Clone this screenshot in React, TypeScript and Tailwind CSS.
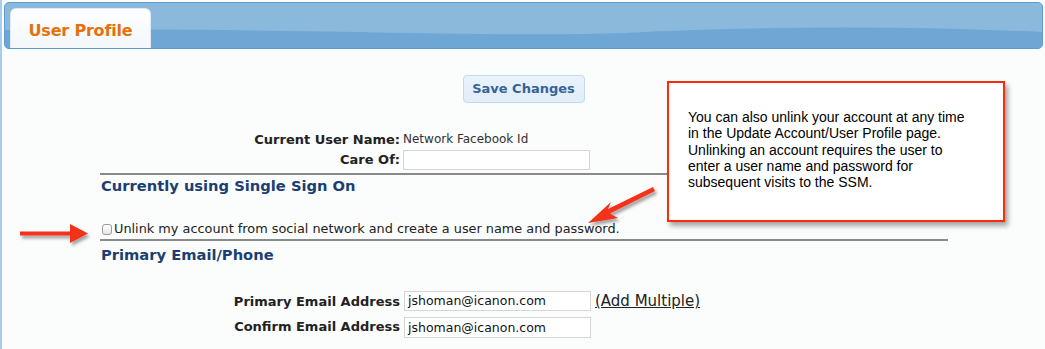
import React from "react";

const label = "font-bold text-[#222] text-right";

export default function App() {
  return (
    <div
      className="relative w-[1045px] h-[349px] overflow-hidden bg-[#fbfcfc] border-l-2 border-[#a9cdea]"
      style={{ fontFamily: '"DejaVu Sans", Verdana, sans-serif' }}
    >
      {/* header bar */}
      <div className="relative mt-[2px] ml-[2px] w-[1039px] h-[47px] rounded-[5px] border border-[#5e9bd0] overflow-hidden bg-[#6ea7d3]">
        <svg className="absolute inset-0" width="1039" height="47" viewBox="0 0 1039 47" preserveAspectRatio="none">
          <path d="M0 0 H1039 V29 C900 23 760 23 620 30 C480 35 300 24 0 27 Z" fill="#8bb9dc" />
        </svg>
        <div className="absolute left-[5px] top-[5px] w-[141px] h-[42px] rounded-t-[6px] bg-gradient-to-b from-[#fdfeff] to-[#f3f7fa] border-t border-x border-[#dfe9f2] flex items-center justify-center">
          <span className="text-[#e4700e] font-bold text-[16px] tracking-[-0.2px] mt-[2px]">User Profile</span>
        </div>
      </div>

      {/* save button */}
      <div className="flex justify-center mt-[26px]">
        <button className="w-[122px] h-[28px] rounded-[4px] border border-[#c2d9ef] bg-gradient-to-b from-[#eaf3fc] to-[#e1edf9] text-[#376496] font-bold text-[13px]">
          Save Changes
        </button>
      </div>

      {/* form */}
      <div className="pl-[98px] w-[946px] mt-[28px] text-[12px]">
        <div className="grid grid-cols-[300px_1fr] gap-x-[3px] gap-y-[2px] items-center">
          <div className={label + " text-[13px] h-[17px] leading-[17px]"}>Current User Name:</div>
          <div className="text-[#333] text-[12px] h-[17px] leading-[17px]">Network Facebook Id</div>
          <div className={label + " text-[13px]"}>Care Of:</div>
          <div className="w-[187px] h-[20px] border border-[#d5d5d5] bg-white" />
        </div>
        <div className="mt-[3px] border-t-2 border-[#8a8a8a]" />
        <div className="pl-[1px] text-[14.7px] font-bold text-[#1b3f72] leading-[22px]">Currently using Single Sign On</div>
        <div className="mt-[22px] flex items-center pl-[2px] h-[20px]">
          <span className="w-[10px] h-[11px] rounded-[3px] border border-[#9a9a9a] bg-gradient-to-b from-white to-[#e6e6e6] mr-[2px]" />
          <span className="text-[#222] text-[12.85px]">Unlink my account from social network and create a user name and password.</span>
        </div>
        <div className="border-t-2 border-[#8a8a8a]" />
        <div className="pl-[1px] mt-[3px] text-[14.7px] font-bold text-[#1b3f72] leading-[22px]">Primary Email/Phone</div>
        <div className="mt-[24px] grid grid-cols-[300px_1fr] gap-x-[4px] gap-y-[4px] items-center">
          <div className={label + " text-[13px]"}>Primary Email Address</div>
          <div className="flex items-center gap-[4px]">
            <div className="w-[187px] h-[20px] border border-[#d5d5d5] bg-white px-[3px] text-[12.5px] text-[#111] leading-[18px]">jshoman@icanon.com</div>
            <span className="underline text-[#222] text-[15px]">(Add Multiple)</span>
          </div>
          <div className={label + " text-[13px]"}>Confirm Email Address</div>
          <div className="w-[187px] h-[21px] border border-[#d5d5d5] bg-white px-[3px] text-[12.5px] text-[#111] leading-[19px]">jshoman@icanon.com</div>
        </div>
      </div>

      {/* callout */}
      <div
        className="absolute left-[665px] top-[81px] w-[338px] h-[141px] bg-white border-2 border-[#ff2a0a] shadow-[3px_4px_5px_rgba(0,0,0,0.35)] pl-[19px] pt-[26px] text-[14px] leading-[16.3px] text-black"
        style={{ fontFamily: '"Liberation Sans", Arial, sans-serif' }}
      >
        You can also unlink your account at any time
        <br />in the Update Account/User Profile page.
        <br />Unlinking an account requires the user to
        <br />enter a user name and password for
        <br />subsequent visits to the SSM.
      </div>

      {/* arrows */}
      <svg className="absolute left-0 top-0 pointer-events-none" width="1045" height="349">
        <defs>
          <filter id="sh" x="-20%" y="-50%" width="140%" height="200%">
            <feDropShadow dx="2" dy="3" stdDeviation="1.5" floodColor="#000" floodOpacity="0.35" />
          </filter>
        </defs>
        <g filter="url(#sh)" fill="#f4301a">
          <path d="M18 231.5 L68 231.5 L68 224 L86 233.5 L68 243 L68 235.5 L18 235.5 Z" />
          <path d="M651 187 L606 209 L609 202 L586 223 L616 218 L608 213.5 L653 191 Z" />
        </g>
      </svg>
    </div>
  );
}
